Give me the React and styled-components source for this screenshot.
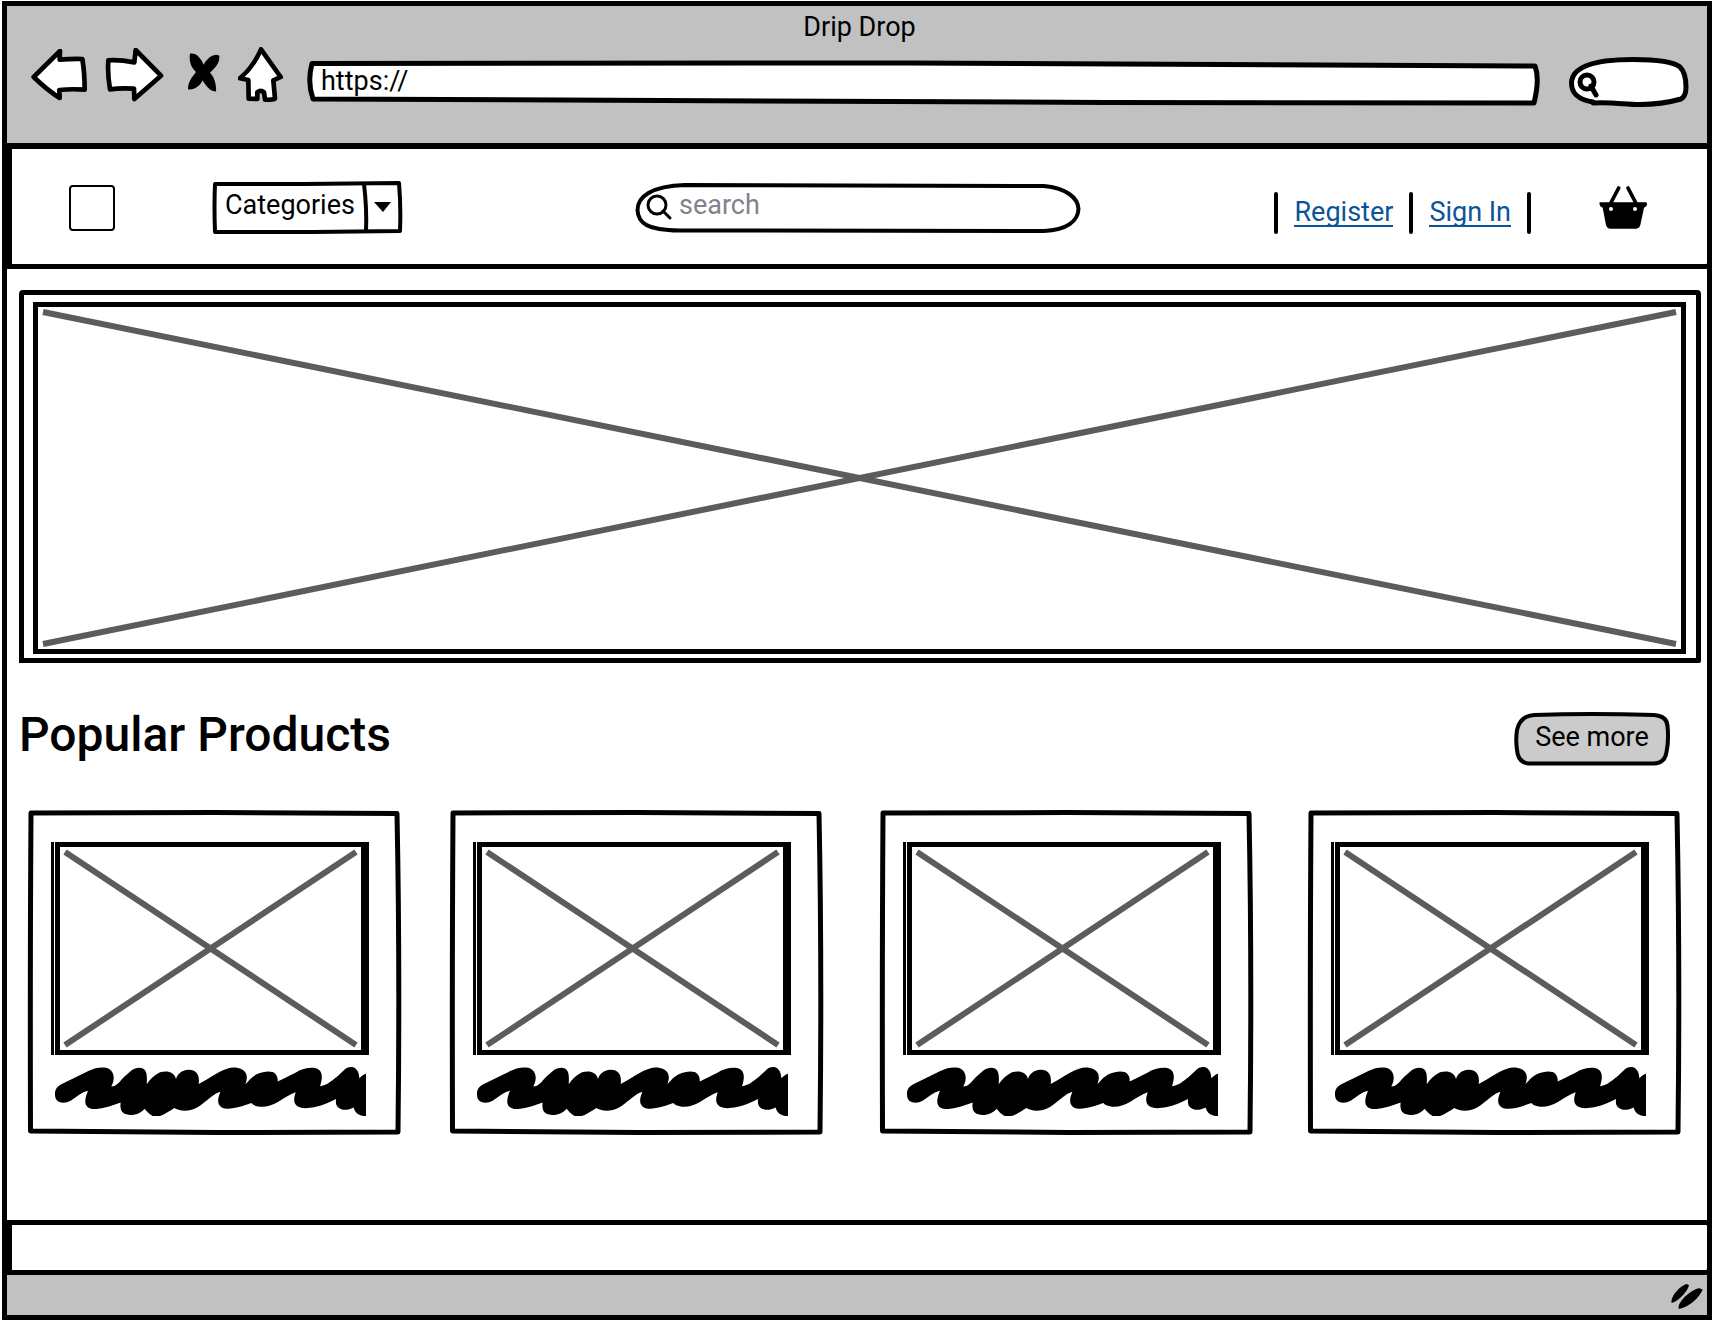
import React from "react";
import styled, { createGlobalStyle } from "styled-components";

const ink = "#000";
const chrome = "#c1c1c1";
const sans = 'Roboto, "Open Sans", "Liberation Sans", sans-serif';

const GlobalStyle = createGlobalStyle`
  * { box-sizing: border-box; }
  body { margin: 0; background: #fff; color: ${ink}; font-family: ${sans}; font-size: 27px; font-weight: 400; }
  button, input, select { font: inherit; color: inherit; }
`;

const Frame = styled.div`
  margin: 1px 2px 2px;
  border: 5px solid ${ink};
  background: #fff;
`;

const Chrome = styled.header`
  padding: 0 19px 35px 24px;
  background: ${chrome};
`;

const WindowTitle = styled.div`
  padding-top: 2px;
  line-height: 39px;
  text-align: center;
`;

const Toolbar = styled.div`
  display: flex;
  align-items: flex-start;
  gap: 23px;
`;

const ToolbarIcons = styled.div`
  display: flex;
  align-items: center;
  gap: 18px;
`;

const IconButton = styled.button`
  display: block;
  padding: 0;
  border: 0;
  background: none;
  cursor: pointer;
  svg { display: block; }
`;

const ToolbarFields = styled.div`
  flex: 1;
  display: flex;
  align-items: center;
  gap: 29px;
  padding-top: 10px;
`;

const Sketched = styled.div`
  position: relative;
  display: flex;
  flex: ${(p) => p.$grow || "none"};
  width: ${(p) => p.$width || "auto"};
  height: ${(p) => p.$height};
`;

const OutlineSvg = styled.svg`
  position: absolute;
  inset: 0;
  width: 100%;
  height: 100%;
  overflow: visible;
  pointer-events: none;
`;

const Field = styled.input`
  position: relative;
  flex: 1;
  min-width: 0;
  padding: ${(p) => p.$pad};
  border: 0;
  outline: 0;
  background: transparent;
  &::placeholder { color: #82828c; opacity: 1; }
`;

const SiteNav = styled.nav`
  position: relative;
  display: grid;
  grid-template-columns: 1fr 446px 1fr;
  align-items: center;
  height: 126px;
  margin-right: -5px;
  padding: 2px 60px 0 57px;
  border: 5px solid ${ink};
  border-top-width: 6px;
  border-radius: 0 6px 6px 0;
  background: #fff;
`;

const NavLeft = styled.div`
  display: flex;
  align-items: center;
  gap: 98px;
`;

const Logo = styled.a`
  width: 46px;
  height: 46px;
  border: 2px solid ${ink};
  border-radius: 4px;
`;

const Select = styled.select`
  flex: 1;
  appearance: none;
  padding: 0 40px 6px 12px;
  border: 0;
  outline: 0;
  background: transparent;
`;

const NavRight = styled.div`
  display: flex;
  align-items: center;
  justify-content: flex-end;
  gap: 68px;
`;

const Account = styled.div`
  display: flex;
  align-items: center;
  gap: 16px;
  padding-top: 10px;
`;

const Bar = styled.span`
  width: 4px;
  height: 42px;
  border-radius: 2px;
  background: ${ink};
`;

const AccountLink = styled.a`
  border-bottom: 2px solid #0b5499;
  color: #0b5499;
  line-height: 26px;
  text-decoration: none;
  white-space: nowrap;
`;

const Main = styled.main`
  padding: 21px 6px 85px 12px;
`;

const Hero = styled.section`
  display: flex;
  height: 373px;
  padding: 7px 10px 4px 9px;
  border: 5px solid ${ink};
  border-radius: 4px 4px 2px 0;
`;

const Picture = styled.div`
  flex: 1;
  display: flex;
  height: ${(p) => p.$height || "auto"};
  padding: 5px;
  border: 5px solid ${ink};
  box-shadow: ${(p) => (p.$shaded ? `-1px 0 #fff, -4px 0 ${ink}, 3px 0 ${ink}` : "none")};
`;

const Cross = styled.svg`
  flex: 1;
  min-width: 0;
  height: 100%;
  overflow: visible;
  stroke: #5c5c5e;
  stroke-width: 6;
`;

const SectionHead = styled.div`
  display: flex;
  justify-content: space-between;
  padding: 0 31px 0 0;
  margin: 49px 0 44px;
`;

const Heading = styled.h2`
  margin: 0;
  font-size: 48px;
  font-weight: 500;
  line-height: 46px;
`;

const MoreButton = styled.button`
  position: relative;
  width: 156px;
  height: 54px;
  padding: 0 0 5px;
  border: 0;
  background: none;
  cursor: pointer;
`;

const ButtonText = styled.span`
  position: relative;
`;

const Products = styled.ul`
  display: grid;
  grid-template-columns: 422fr 430fr 428fr 373px;
  margin: 0;
  padding: 0 20px 0 9px;
  list-style: none;
`;

const Card = styled.li`
  position: relative;
  width: 373px;
  height: 325px;
  padding: 32px 35px 0 27px;
`;

const ScribbleSvg = styled.svg`
  display: block;
  width: 100%;
  height: 49px;
  margin-top: 12px;
`;

const FooterBox = styled.footer`
  position: relative;
  height: 55px;
  margin-right: -5px;
  border: 5px solid ${ink};
  border-radius: 0 6px 6px 0;
  background: #fff;
`;

const StatusBar = styled.div`
  display: flex;
  align-items: center;
  justify-content: flex-end;
  height: 40px;
  padding: 2px 4px 0;
  background: ${chrome};
`;

function Outline({ w, h, d, fill = "#fff", stroke = 4, children }) {
  return (
    <OutlineSvg viewBox={`0 0 ${w} ${h}`} preserveAspectRatio="none" aria-hidden="true">
      <path d={d} fill={fill} stroke={ink} strokeWidth={stroke} strokeLinejoin="round" vectorEffect="non-scaling-stroke" />
      {children}
    </OutlineSvg>
  );
}

function Glyph({ width, height, box, children }) {
  return (
    <svg width={width} height={height} viewBox={box} fill="#fff" stroke={ink} strokeWidth="14" strokeLinejoin="round" aria-hidden="true">
      {children}
    </svg>
  );
}

function Placeholder({ height, shaded }) {
  return (
    <Picture $height={height} $shaded={shaded}>
      <Cross aria-hidden="true">
        <line x1="0" y1="0" x2="100%" y2="100%" />
        <line x1="100%" y1="0" x2="0" y2="100%" />
      </Cross>
    </Picture>
  );
}

function Scribble() {
  return (
    <ScribbleSvg viewBox="165 140 933 148" preserveAspectRatio="none" aria-hidden="true">
      <path d="M165,222 C165,208 170,200 184,192 L265,152 C285,142 300,140 318,142 C335,146 342,160 341,175 C341,185 337,192 334,199 C350,198 358,185 372,170 L395,150 C405,142 420,140 430,145 C440,152 442,165 440,192 C450,178 462,165 480,156 C500,150 522,153 528,176 C532,160 545,150 565,148 C590,147 600,165 596,191 C615,182 630,172 650,160 C675,146 690,141 710,142 C740,146 746,168 736,192 C748,180 752,172 770,162 C790,153 805,152 818,155 C832,162 834,175 833,184 C850,176 865,168 885,158 C905,146 925,141 945,143 C967,148 970,168 960,198 C980,195 990,185 1010,170 L1035,147 C1045,138 1060,138 1068,146 C1077,155 1077,165 1078,174 C1085,168 1090,164 1098,160 L1098,288 L1090,288 C1072,284 1064,275 1061,262 C1050,268 1040,270 1030,269 C1012,265 1006,255 1008,237 C990,246 970,256 945,261 C920,266 905,265 895,260 C880,252 880,238 887,216 C870,222 855,232 835,245 C815,257 800,261 780,260 C765,258 758,254 754,249 C730,257 705,267 680,266 C660,264 652,252 655,235 C656,228 659,222 661,215 C645,220 635,230 615,245 C595,262 580,271 555,272 C540,272 530,268 523,264 C510,272 495,283 480,288 L458,288 C448,282 440,275 434,266 C425,277 410,285 392,285 C370,283 358,275 362,247 C340,255 315,264 290,267 C265,268 254,258 256,240 C257,228 261,220 264,212 C245,216 230,230 212,242 C198,250 178,250 170,240 C166,234 165,228 165,222Z" />
    </ScribbleSvg>
  );
}

const products = ["one", "two", "three", "four"];

export default function App() {
  return (
    <>
      <GlobalStyle />
      <Frame>
        <Chrome>
          <WindowTitle>Drip Drop</WindowTitle>
          <Toolbar>
            <ToolbarIcons>
              <IconButton aria-label="Back">
                <Glyph width="56" height="52" box="93 143 168 156">
                  <path d="M101,227 L180,149 L179,175 Q215,172 247,173 Q254,215 254,265 Q215,262 178,266 L179,290 Q140,265 101,227Z" />
                </Glyph>
              </IconButton>
              <IconButton aria-label="Forward">
                <Glyph width="59" height="54" box="315 143 177 162">
                  <path d="M325,180 Q360,178 403,186 L407,149 L483,226 L403,296 L402,265 Q365,262 330,267 Q322,220 325,180Z" />
                </Glyph>
              </IconButton>
              <IconButton aria-label="Stop">
                <svg width="38" height="44" viewBox="546 155 114 132" aria-hidden="true">
                  <path d="M570,157 C590,152 605,175 611,190 C625,165 645,155 658,163 C660,185 645,200 630,214 C642,225 650,250 648,270 C630,272 615,250 608,237 C600,255 580,268 564,264 C564,240 578,225 588,212 C574,200 566,180 570,157Z" />
                </svg>
              </IconButton>
              <IconButton aria-label="Home">
                <Glyph width="46" height="55" box="712 138 138 165">
                  <path d="M781,145 L840,228 L818,238 L823,293 Q810,297 793,296 L790,274 Q780,265 770,274 L770,294 L744,293 L743,237 L718,232 Q758,198 781,145Z" />
                </Glyph>
              </IconButton>
            </ToolbarIcons>
            <ToolbarFields>
              <Sketched $grow="1" $height="45px">
                <Outline w={1233} h={45} stroke={5} d="M5,3.5 L600,3 L1228,6 Q1233,19 1227,43 L800,42.5 L6,39 Q0,22 5,3.5Z" />
                <Field aria-label="Address" defaultValue="https://" $pad="0 14px 3px" />
              </Sketched>
              <Sketched $width="119px" $height="51px">
                <Outline w={119} h={51} stroke={5} d="M24,45 C6,42 2.5,34 2.5,26 C3,8 30,2.5 64,2.5 C90,2.5 105,5 111,10 C116,15 117,24 117,30 C117,36 116,40 112,42 C98,46 85,47.5 71,47.5 C55,47.5 45,45 24,46Z">
                  <g fill="none" stroke={ink} strokeWidth="5" strokeLinecap="round">
                    <circle cx="18" cy="25" r="7" />
                    <path d="M22,29 L27,38" />
                  </g>
                </Outline>
                <Field aria-label="Web search" $pad="0 14px 0 34px" />
              </Sketched>
            </ToolbarFields>
          </Toolbar>
        </Chrome>

        <SiteNav>
          <NavLeft>
            <Logo href="#" aria-label="Drip Drop" />
            <Sketched $width="189px" $height="54px">
              <Select aria-label="Categories">
                <option>Categories</option>
              </Select>
              <Outline w={189} h={54} fill="none" d="M2,3 L90,3 L186,2 Q188,25 187,50 L100,51 L2,51 Q1,25 2,3Z">
                <path d="M151,3 Q154,28 153,51" fill="none" stroke={ink} strokeWidth="4" />
                <path d="M161,21 L178,21 L170,31Z" />
              </Outline>
            </Sketched>
          </NavLeft>
          <Sketched $height="50px">
            <Outline w={446} h={50} d="M50,2 C16,3 2.5,14 2.5,27 C3,40 12,47 44,47.5 L409,48 C432,47 443,38 443.5,26 C443,14 430,5 409,3Z">
              <g fill="none" stroke={ink} strokeWidth="3" strokeLinecap="round">
                <circle cx="22" cy="22" r="9" />
                <path d="M28,28 L35,35" />
              </g>
            </Outline>
            <Field type="search" aria-label="Search" placeholder="search" $pad="0 24px 6px 44px" />
          </Sketched>
          <NavRight>
            <Account>
              <Bar />
              <AccountLink href="#">Register</AccountLink>
              <Bar />
              <AccountLink href="#">Sign In</AccountLink>
              <Bar />
            </Account>
            <IconButton aria-label="Basket">
              <svg width="48" height="43" viewBox="1074 560 144 129" aria-hidden="true">
                <path d="M1076,609 h140 q4,4 0,12 l-7,4 l-11,52 q-3,11 -14,11 h-76 q-10,0 -13,-11 l-10,-52 l-7,-4 q-4,-8 -2,-12z" />
                <path d="M1133,566 L1110,610 M1161,566 L1184,610" stroke={ink} strokeWidth="11" strokeLinecap="round" />
                <circle cx="1110" cy="629" r="6" fill="#fff" />
                <circle cx="1182" cy="629" r="6" fill="#fff" />
              </svg>
            </IconButton>
          </NavRight>
        </SiteNav>

        <Main>
          <Hero>
            <Placeholder />
          </Hero>
          <SectionHead>
            <Heading>Popular Products</Heading>
            <MoreButton>
              <Outline w={156} h={54} fill="#cbcbcb" d="M20,3 Q76,1 140,3 Q153,4 153.5,14 Q155,28 152.5,40 Q151,51 140,51.5 L14,51.5 Q4,50 3,38 Q1.5,28 3,18 Q6,4 20,3Z" />
              <ButtonText>See more</ButtonText>
            </MoreButton>
          </SectionHead>
          <Products>
            {products.map((id) => (
              <Card key={id}>
                <Outline w={373} h={325} fill="none" stroke={5} d="M3,3 L186,2.5 L369,3.5 Q372,150 370,322 L190,322.5 L2.5,321 Q2,150 3,3Z" />
                <Placeholder height="213px" shaded />
                <Scribble />
              </Card>
            ))}
          </Products>
        </Main>

        <FooterBox />
        <StatusBar>
          <svg width="32" height="25" viewBox="1172 793 96 75" aria-hidden="true">
            <path d="M1226,796 C1224,810 1200,842 1174,850 C1168,832 1200,798 1218,793Z" />
            <path d="M1267,810 C1257,832 1230,860 1196,868 C1186,852 1232,808 1258,806Z" />
          </svg>
        </StatusBar>
      </Frame>
    </>
  );
}
